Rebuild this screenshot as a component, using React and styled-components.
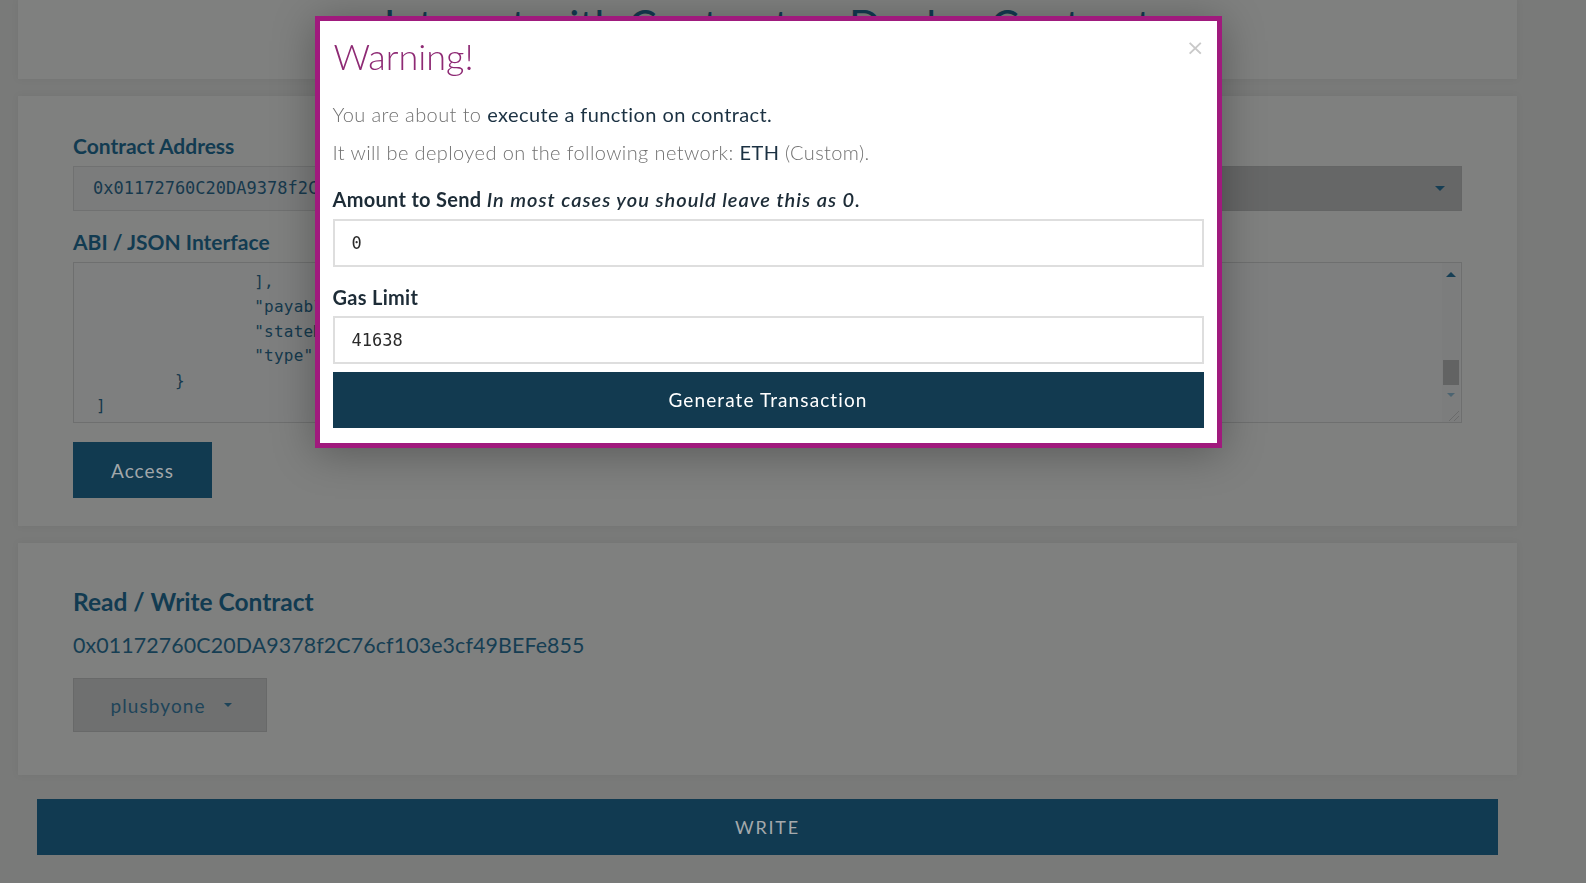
import React from "react"
import styled, { createGlobalStyle } from "styled-components"

const GlobalStyle = createGlobalStyle`
  html, body {
    margin: 0;
    padding: 0;
  }
  body {
    background: #797a79;
    font-family: Lato, "Open Sans", sans-serif;
    overflow: hidden;
  }
  * {
    box-sizing: border-box;
  }
`

const mono = `"DejaVu Sans Mono", "Liberation Mono", monospace`

const Page = styled.div`
  width: 1517px;
  padding: 0 0 40px 18px;
`

const Card = styled.section`
  background: #7f807f;
  box-shadow: 0 0 8px rgba(0, 0, 0, 0.05);
  padding: ${p => p.$pad || "0"};
  margin-bottom: ${p => p.$gap || "17px"};
`

const TopCard = styled(Card)`
  height: 79px;
  overflow: hidden;
  text-align: center;
`

const PageTitle = styled.h1`
  margin: 0;
  font-size: 42px;
  font-weight: 400;
  line-height: 1.2;
  color: #123a50;
`

const Label = styled.div`
  font-size: 21px;
  font-weight: 700;
  line-height: 24px;
  color: #123b51;
  margin-top: ${p => p.$top || "0"};
  margin-bottom: 8px;
`

const FieldRow = styled.div`
  display: flex;
  gap: 20px;
`

const AddressInput = styled.div`
  flex: 1;
  height: 45px;
  border: 1px solid #707171;
  background: #7b7c7c;
  font-family: ${mono};
  font-size: 17px;
  line-height: 43px;
  padding-left: 19px;
  color: #17394d;
  white-space: nowrap;
  overflow: hidden;
`

const SelectBox = styled.div`
  flex: 1;
  height: 45px;
  background: #666767;
  border: 1px solid #646565;
  display: flex;
  align-items: center;
  justify-content: space-between;
  padding: 0 16px 0 20px;
  font-size: 18px;
  color: #1c3f53;
`

const Caret = styled.span`
  width: 0;
  height: 0;
  border-left: ${p => p.$size || 5}px solid transparent;
  border-right: ${p => p.$size || 5}px solid transparent;
  border-top: ${p => p.$size || 5}px solid ${p => p.$color || "#163e54"};
`

const TextArea = styled.div`
  height: 161px;
  border: 1px solid #6e6f6f;
  background: #7e7f7f;
  display: flex;
`

const Code = styled.pre`
  flex: 1;
  margin: 0;
  padding: 7px 0 0 22px;
  font-family: ${mono};
  font-size: 16px;
  letter-spacing: 0.25px;
  line-height: 24.8px;
  color: #15394d;
  overflow: hidden;
`

const ScrollCol = styled.div`
  width: 18px;
  margin-right: 1px;
  display: flex;
  flex-direction: column;
  background: #7c7d7d;
`

const ScrollBtn = styled.div`
  height: ${p => p.$h}px;
  display: flex;
  align-items: center;
  justify-content: center;
`

const UpArrow = styled.span`
  width: 0;
  height: 0;
  border-left: 5px solid transparent;
  border-right: 5px solid transparent;
  border-bottom: 5px solid #173f55;
`

const Track = styled.div`
  flex: 1;
  display: flex;
  flex-direction: column;
  justify-content: flex-end;
  padding: 0 1px 2px;
`

const Thumb = styled.div`
  height: 25px;
  background: #626363;
`

const Grip = styled.div`
  height: 19px;
  display: flex;
  align-items: flex-end;
  justify-content: flex-end;
`

const PrimaryButton = styled.button`
  display: block;
  border: none;
  background: #113a50;
  color: #a1a7aa;
  font-family: Lato, sans-serif;
  font-size: 19px;
  letter-spacing: 1px;
  width: ${p => p.$w || "auto"};
  height: 56px;
  margin-top: ${p => p.$top || "0"};
  padding: 0;
`

const SectionTitle = styled.div`
  font-size: 24.5px;
  font-weight: 700;
  line-height: 29px;
  color: #123b51;
`

const AddressText = styled.div`
  font-size: 21.4px;
  line-height: 24px;
  margin-top: 17px;
  color: #163e53;
  letter-spacing: 0.1px;
`

const DropButton = styled.div`
  margin-top: 21px;
  width: 194px;
  height: 54px;
  background: #6f7070;
  border: 1px solid #686969;
  display: flex;
  align-items: center;
  justify-content: center;
  gap: 18px;
  padding-left: 2px;
  font-size: 19px;
  color: #1e4459;
  letter-spacing: 1.1px;
`

const WriteBar = styled.div`
  margin: 0 19px;
  height: 56px;
  background: #113a51;
  color: #a4a9ac;
  display: flex;
  align-items: center;
  justify-content: center;
  font-size: 18px;
  letter-spacing: 1.8px;
`

/* modal */

const Backdrop = styled.div`
  position: fixed;
  top: 0;
  left: 0;
  right: 50px;
  bottom: 0;
  display: flex;
  justify-content: center;
  align-items: flex-start;
  padding-top: 16px;
`

const Dialog = styled.div`
  width: 907px;
  background: #fff;
  border: 5px solid #a01a7d;
  box-shadow: 0 5px 40px rgba(0, 0, 0, 0.3);
  padding: 12px 13px 15px;
`

const Header = styled.div`
  display: flex;
  justify-content: space-between;
  align-items: flex-start;
`

const WarnTitle = styled.h3`
  margin: 0 0 0 1px;
  font-size: 36px;
  font-weight: 300;
  line-height: 46px;
  color: #8e2a74;
`

const Close = styled.span`
  font-family: "DejaVu Sans", sans-serif;
  font-size: 22px;
  line-height: 1;
  color: #c9c9c9;
  margin: 4px -1px 0 0;
`

const Para = styled.p`
  margin: ${p => p.$top || "0"} 0 0;
  font-size: 20px;
  line-height: 24px;
  letter-spacing: 0.4px;
  color: #1b3142;
`

const Light = styled.span`
  font-weight: 300;
  color: #717171;
`

const FieldLabel = styled.div`
  margin-top: ${p => p.$top};
  font-size: 20px;
  line-height: 23.4px;
  letter-spacing: 0.3px;
  font-weight: 700;
  color: #1d2c37;

  em {
    font-weight: 600;
    letter-spacing: 1px;
  }
`

const ModalInput = styled.div`
  margin-top: ${p => p.$top || "8px"};
  height: 48px;
  border: 2px solid #dedede;
  display: flex;
  align-items: center;
  padding-left: 17px;
  font-family: ${mono};
  font-size: 17px;
  color: #2a2a2a;
`

const GenerateButton = styled.button`
  display: block;
  width: 100%;
  margin-top: 8px;
  height: 56px;
  border: none;
  background: #123a50;
  color: #fff;
  font-family: Lato, sans-serif;
  font-size: 19px;
  letter-spacing: 1.1px;
`

const abi = [
  "                ],",
  "                \"payable\": false,",
  "                \"stateMutability\": \"nonpayable\",",
  "                \"type\": \"function\"",
  "        }",
  "]",
].join("\n")

export default function App() {
  return (
    <>
      <GlobalStyle />
      <Page>
        <TopCard>
          <PageTitle>Interact with Contract or Deploy Contract</PageTitle>
        </TopCard>

        <Card $pad="38px 55px 28px">
          <Label>Contract Address</Label>
          <FieldRow>
            <AddressInput>0x01172760C20DA9378f2C76cf103e3cf49BEFe855</AddressInput>
            <SelectBox>
              Select Existing Contract
              <Caret />
            </SelectBox>
          </FieldRow>

          <Label $top="19px">ABI / JSON Interface</Label>
          <TextArea>
            <Code>{abi}</Code>
            <ScrollCol>
              <ScrollBtn $h={22}><UpArrow /></ScrollBtn>
              <Track><Thumb /></Track>
              <ScrollBtn $h={16}><Caret $size={4} $color="#4c6471" /></ScrollBtn>
              <Grip>
                <svg width="14" height="14" viewBox="0 0 14 14">
                  <path d="M13 3 L3 13 M13 8 L8 13" stroke="#6a6b6b" strokeWidth="1" />
                </svg>
              </Grip>
            </ScrollCol>
          </TextArea>

          <PrimaryButton $w="139px" $top="19px">Access</PrimaryButton>
        </Card>

        <Card $pad="44px 55px 43px" $gap="24px">
          <SectionTitle>Read / Write Contract</SectionTitle>
          <AddressText>0x01172760C20DA9378f2C76cf103e3cf49BEFe855</AddressText>
          <DropButton>
            plusbyone
            <Caret $size={4} $color="#1e4459" />
          </DropButton>
        </Card>

        <WriteBar>WRITE</WriteBar>
      </Page>

      <Backdrop>
        <Dialog>
          <Header>
            <WarnTitle>Warning!</WarnTitle>
            <Close>×</Close>
          </Header>
          <Para $top="23px">
            <Light>You are about to </Light>execute a function on contract.
          </Para>
          <Para $top="14px">
            <Light>It will be deployed on the following network: </Light>ETH <Light>(Custom).</Light>
          </Para>

          <FieldLabel $top="24px">
            Amount to Send <em>In most cases you should leave this as 0.</em>
          </FieldLabel>
          <ModalInput>0</ModalInput>

          <FieldLabel $top="19px">Gas Limit</FieldLabel>
          <ModalInput $top="6px">41638</ModalInput>

          <GenerateButton>Generate Transaction</GenerateButton>
        </Dialog>
      </Backdrop>
    </>
  )
}
